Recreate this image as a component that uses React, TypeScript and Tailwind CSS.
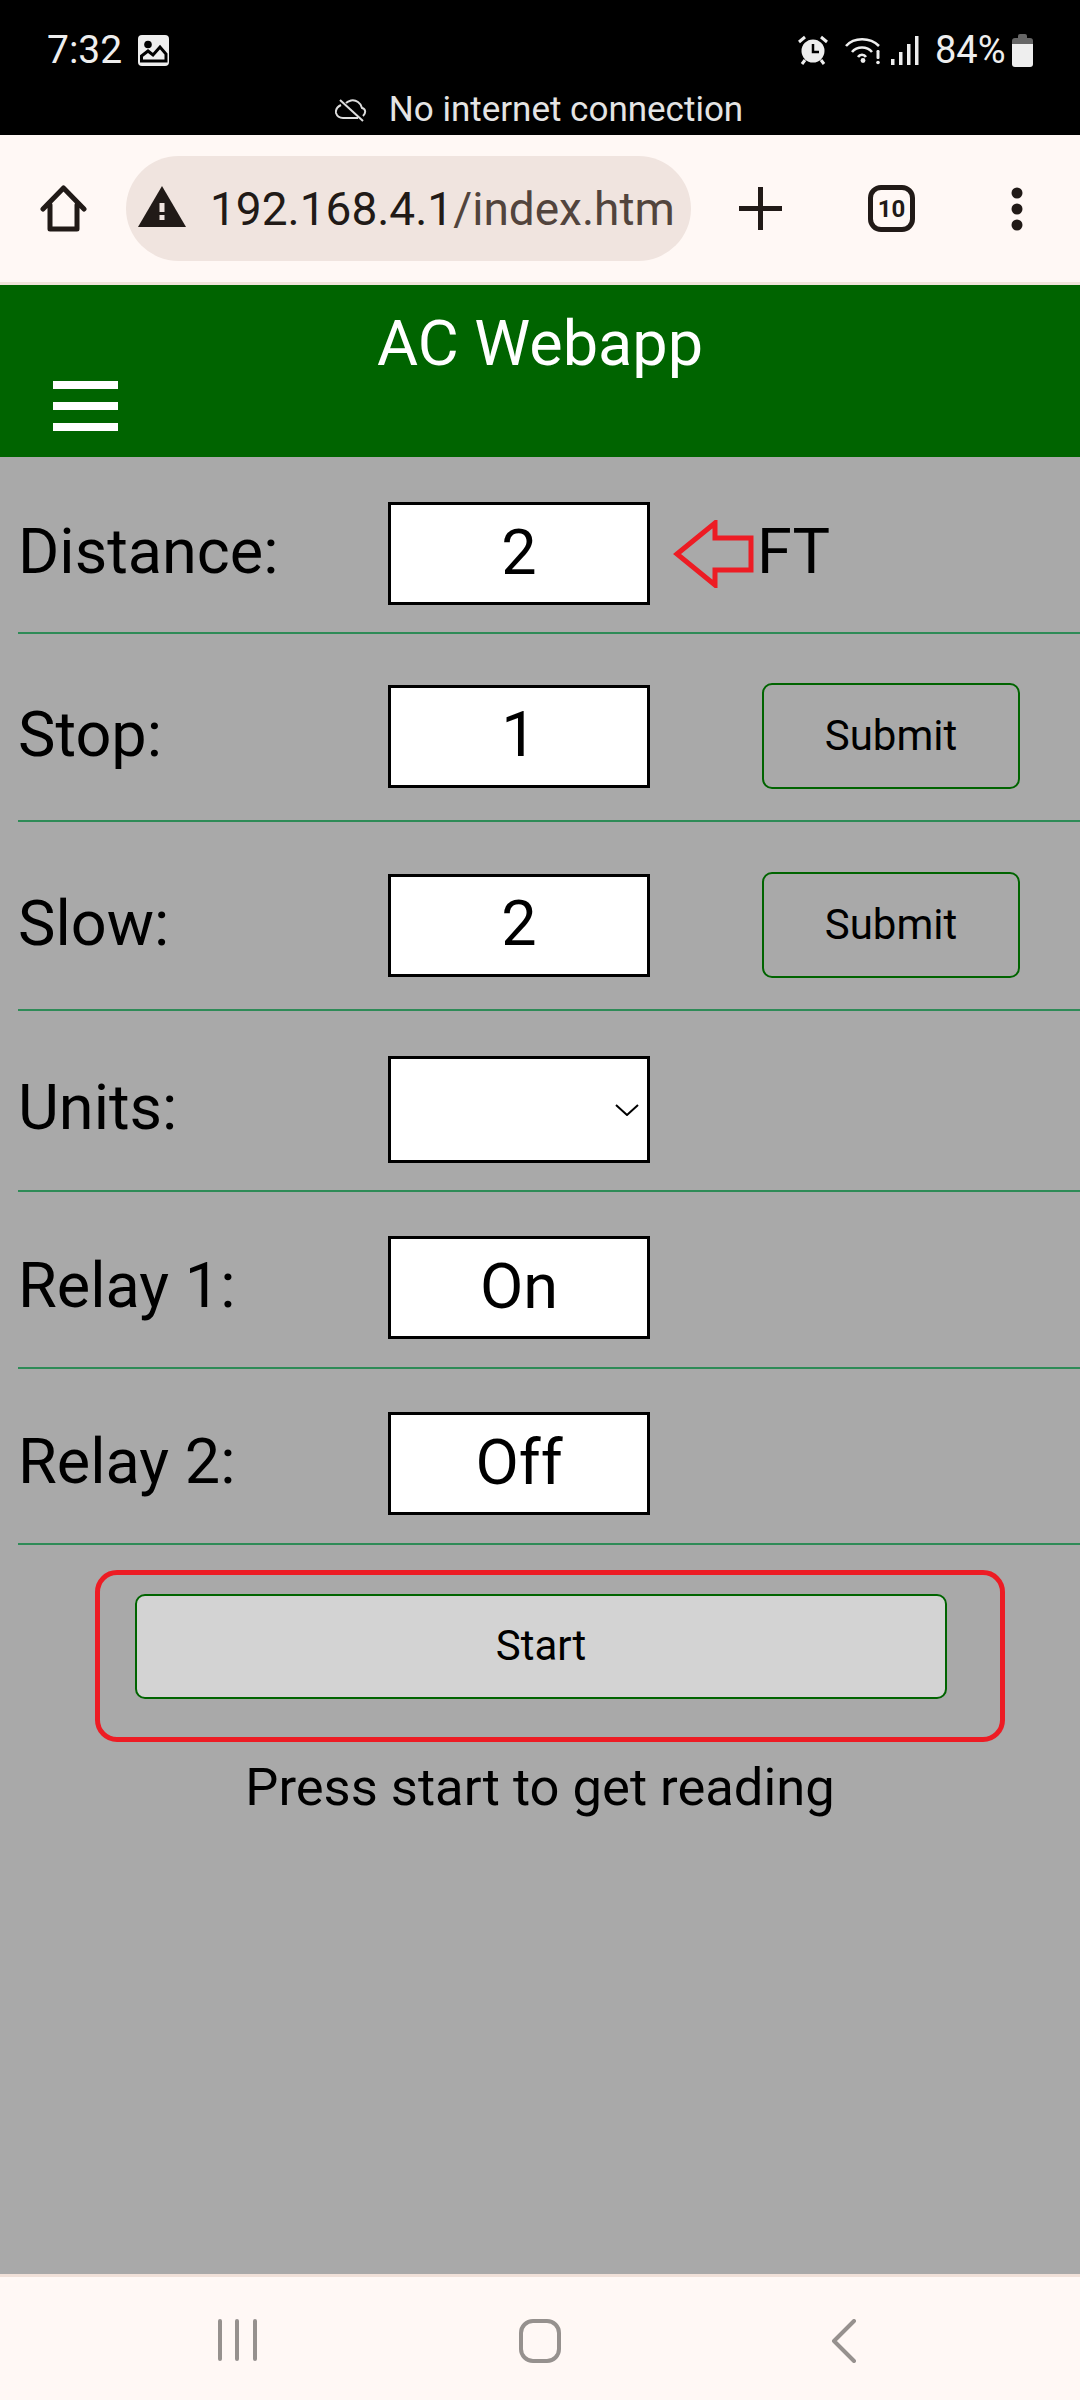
import type { ReactNode } from "react";

const FONT = "font-['Roboto',sans-serif]";

function StatusBar() {
  return (
    <div className="h-[135px] bg-black text-[#eeeeee] flex flex-col shrink-0">
      <div className="h-[88px] pl-[47px] pr-[47px] pt-[26px] flex items-start justify-between">
        <div className="flex items-center h-[48px]">
          <span className="text-[39px] leading-[48px] w-[91px]">7:32</span>
          <svg width="31" height="31" viewBox="0 0 31 31">
            <rect x="0" y="0" width="31" height="31" rx="4" fill="#eee" />
            <circle cx="10" cy="9.500" r="3.800" fill="#000" />
            <path d="M3.500 26 V21 L10 16 L15 20 L22 12 L28 19 V26 Z" fill="#eee" stroke="#000" strokeWidth="3" />
          </svg>
        </div>
        <div className="flex items-center h-[48px]">
          <svg width="30" height="30" viewBox="0 0 30 30" className="mr-[17px]">
            <circle cx="15" cy="16" r="11.500" fill="#eee" />
            <path d="M15 9 V17 H21" stroke="#000" strokeWidth="2.500" fill="none" />
            <path d="M1 7 L7 2 M29 7 L23 2 M4 29 L7 25 M26 29 L23 25" stroke="#eee" strokeWidth="3" fill="none" />
          </svg>
          <svg width="36" height="30" viewBox="0 0 36 30" className="mr-[10px]">
            <path d="M1 11 C9 2 25 2 34 11 M7 17 C12 11 22 11 27 17 M13 22 C15 19 19 19 21 22" stroke="#eee" strokeWidth="2.600" fill="none" />
            <circle cx="18" cy="25.500" r="2.400" fill="#eee" />
            <rect x="31.500" y="15" width="3" height="9" rx="1.200" fill="#eee" />
            <circle cx="33" cy="27.500" r="1.800" fill="#eee" />
          </svg>
          <svg width="28" height="30" viewBox="0 0 28 30" className="mr-[16px]">
            <rect x="0" y="24" width="3.500" height="6" fill="#eee" />
            <rect x="8" y="17" width="3.500" height="13" fill="#eee" />
            <rect x="16" y="9" width="3.500" height="21" fill="#eee" />
            <rect x="24" y="1" width="3.500" height="29" fill="#eee" />
          </svg>
          <span className="text-[38px] leading-[48px] w-[77px]">84%</span>
          <svg width="21" height="33" viewBox="0 0 21 33">
            <path d="M6 4 V2 Q6 0 8 0 H13 Q15 0 15 2 V4 H18 Q21 4 21 7 V12 H0 V7 Q0 4 3 4 Z" fill="#666" />
            <path d="M0 10 H21 V30 Q21 33 18 33 H3 Q0 33 0 30 Z" fill="#eee" />
          </svg>
        </div>
      </div>
      <div className="flex items-center justify-center h-[40px] pr-[2px] mt-[2px]">
        <svg width="32" height="24" viewBox="0 0 32 24" fill="none" stroke="#ddd" strokeWidth="2" className="mr-[22px]">
          <path d="M6 7 C2 9 0.500 12 1 15 C2 18 4 20 8 20 H23 M28 18 C31 15 31 11 27 10 C26 5 21 1.500 16 2.500 C14 3 12.500 3.500 11 5" />
          <path d="M5 2 L28 23" />
        </svg>
        <span className="text-[35px] leading-[40px] text-[#e4e4e4]">No internet connection</span>
      </div>
    </div>
  );
}

function BrowserBar() {
  return (
    <div className="h-[150px] bg-[#fff8f5] border-b-[3px] border-[#f0e4da] flex items-center shrink-0 relative">
      <svg width="47" height="47" viewBox="0 0 47 47" fill="none" stroke="#211a17" strokeWidth="5" strokeLinecap="round" strokeLinejoin="round" className="ml-[40px] mr-[39px]">
        <path d="M3 24 L23.500 3 L44 24 M10 20 V44 H37 V20" />
      </svg>
      <div className="w-[565px] h-[105px] rounded-full bg-[#f0e4df] flex items-center pl-[12px]">
        <svg width="48" height="41" viewBox="0 0 48 41" className="mr-[24px] mb-[4px]">
          <path d="M24 0 L48 41 H0 Z" fill="#211a17" />
          <rect x="21.500" y="17" width="5" height="9" fill="#f0e4df" />
          <rect x="21.500" y="29" width="5" height="5" fill="#f0e4df" />
        </svg>
        <span className="text-[46px] leading-[56px] whitespace-nowrap text-[#211a17]">
          192.168.4.1<span className="text-[#52443d]">/index.htm</span>
        </span>
      </div>
      <svg width="43" height="43" viewBox="0 0 43 43" stroke="#211a17" strokeWidth="5" className="ml-[48px]">
        <path d="M0 21.500 H43 M21.500 0 V43" />
      </svg>
      <div className="ml-[86px] w-[47px] h-[47px] rounded-[13px] border-[5px] border-[#211a17] flex items-center justify-center text-[24px] font-bold text-[#211a17] leading-none">
        10
      </div>
      <svg width="12" height="44" viewBox="0 0 12 44" fill="#211a17" className="ml-[96px]">
        <circle cx="6" cy="6" r="5.500" />
        <circle cx="6" cy="22" r="5.500" />
        <circle cx="6" cy="38" r="5.500" />
      </svg>
    </div>
  );
}

function AppHeader() {
  return (
    <div className="h-[172px] bg-[#006400] shrink-0 flex flex-col">
      <h1 className="text-center text-white text-[63px] leading-[68px] mt-[25px]">AC Webapp</h1>
      <div className="ml-[53px] mt-[3px] w-[65px] flex flex-col gap-[13px]">
        <div className="h-[8px] bg-white" />
        <div className="h-[8px] bg-white" />
        <div className="h-[8px] bg-white" />
      </div>
    </div>
  );
}

function Row({ label, className, children }: { label: string; className: string; children: ReactNode }) {
  return (
    <div className={`ml-[18px] border-b-2 border-[#2e8b57] flex items-center ${className}`}>
      <div className="w-[370px] pb-[3px] text-[63px] leading-[68px] text-black">{label}</div>
      {children}
    </div>
  );
}

function ValueInput({ value }: { value: string }) {
  return (
    <input
      readOnly
      value={value}
      className="w-[262px] h-[103px] pb-[3px] bg-white border-[3px] border-black text-center text-[63px] text-black outline-none"
    />
  );
}

function SubmitButton() {
  return (
    <button className="ml-[112px] w-[258px] h-[106px] pb-[2px] rounded-[10px] border-2 border-[#006400] text-[42px] text-black bg-transparent">
      Submit
    </button>
  );
}

function BottomNav() {
  return (
    <div className="mt-auto h-[126px] bg-[#fff8f5] border-t-[3px] border-[#f0e0d8] flex items-start shrink-0 pt-[42px]">
      <svg width="40" height="42" viewBox="0 0 40 42" stroke="#96918e" strokeWidth="4" strokeLinecap="round" className="ml-[218px]">
        <path d="M2 2 V40 M19 2 V40 M37 2 V40" />
      </svg>
      <svg width="42" height="44" viewBox="0 0 42 44" fill="none" stroke="#96918e" strokeWidth="4" className="ml-[261px]">
        <rect x="2" y="2" width="38" height="40" rx="12" />
      </svg>
      <svg width="26" height="44" viewBox="0 0 26 44" fill="none" stroke="#96918e" strokeWidth="4" strokeLinecap="round" strokeLinejoin="round" className="ml-[270px]">
        <path d="M23 2 L3 22 L23 42" />
      </svg>
    </div>
  );
}

export default function App() {
  return (
    <div className={`w-[1080px] h-[2400px] bg-[#a9a9a9] flex flex-col overflow-hidden ${FONT}`}>
      <StatusBar />
      <BrowserBar />
      <AppHeader />

      <Row label="Distance:" className="pt-[45px] pb-[27px]">
        <ValueInput value="2" />
        <svg width="82" height="68" viewBox="0 0 82 68" fill="none" stroke="#ed1c24" strokeWidth="5" className="ml-[23px]">
          <path d="M4 34 L42 3 V18 H78 V50 H42 V65 Z" strokeLinejoin="miter" />
        </svg>
        <span className="ml-[2px] pb-[3px] text-[63px] leading-[68px] text-black">FT</span>
      </Row>
      <Row label="Stop:" className="pt-[49px] pb-[31px]">
        <ValueInput value="1" />
        <SubmitButton />
      </Row>
      <Row label="Slow:" className="pt-[50px] pb-[31px]">
        <ValueInput value="2" />
        <SubmitButton />
      </Row>
      <Row label="Units:" className="pt-[45px] pb-[27px]">
        <div className="relative w-[262px] h-[107px]">
          <select className="w-full h-full bg-white border-[3px] border-black appearance-none rounded-none outline-none" />
          <svg width="24" height="12" viewBox="0 0 24 12" fill="none" stroke="#000" strokeWidth="2" className="absolute right-[11px] top-[48px]">
            <path d="M1 1 L12 11 L23 1" />
          </svg>
        </div>
      </Row>
      <Row label="Relay 1:" className="pt-[44px] pb-[28px]">
        <ValueInput value="On" />
      </Row>
      <Row label="Relay 2:" className="pt-[43px] pb-[28px]">
        <ValueInput value="Off" />
      </Row>

      <div className="ml-[95px] mt-[25px] w-[910px] h-[172px] border-[5px] border-[#ed1c24] rounded-[22px] pl-[35px] pt-[19px]">
        <button className="w-[812px] h-[105px] pb-[2px] rounded-[10px] border-2 border-[#006400] bg-[#d3d3d3] text-[42px] text-black">
          Start
        </button>
      </div>
      <p className="text-center text-[52.500px] leading-[62px] text-black mt-[14px]">Press start to get reading</p>

      <BottomNav />
    </div>
  );
}
